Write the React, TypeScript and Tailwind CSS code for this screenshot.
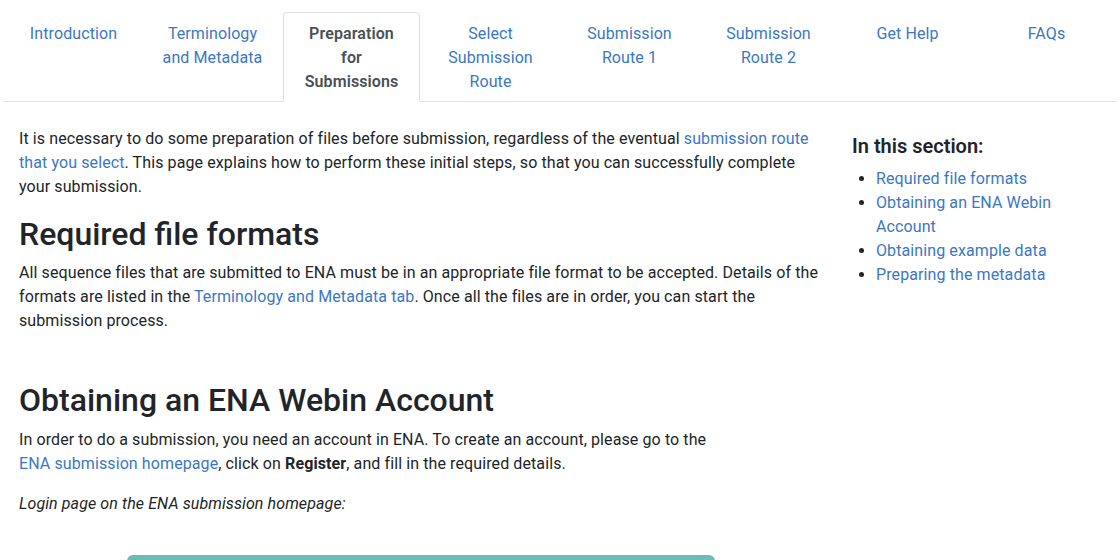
import React from 'react';

const TABS = [
  { id: 'intro', label: 'Introduction' },
  { id: 'terms', label: 'Terminology and Metadata' },
  { id: 'prep', label: 'Preparation for Submissions' },
  { id: 'select', label: 'Select Submission Route' },
  { id: 'route1', label: 'Submission Route 1' },
  { id: 'route2', label: 'Submission Route 2' },
  { id: 'help', label: 'Get Help' },
  { id: 'faqs', label: 'FAQs' },
];

const SECTION_LINKS = [
  'Required file formats',
  'Obtaining an ENA Webin Account',
  'Obtaining example data',
  'Preparing the metadata',
];

const linkCls = 'text-[#3b77c5] hover:underline';

export default function App() {
  const active = 'prep';

  return (
    <div className="min-h-screen bg-white font-['Roboto',sans-serif] text-[16px] leading-6 tracking-[0.1px] text-[#212529]">
      <div className="mx-1 pt-3">
        {/* Tab Navigation */}
        <ul className="flex border-b border-[#dee2e6]">
          {TABS.map((tab) => (
            <li key={tab.id} className="flex-1 -mb-px px-px">
              <a
                href="#"
                className={`block px-4 pt-[9px] pb-[7px] text-center rounded-t border ${
                  active === tab.id
                    ? 'bg-white border-[#dee2e6] border-b-white font-semibold text-[#495057]'
                    : 'border-transparent text-[#3b77c5]'
                }`}
              >
                {tab.label}
              </a>
            </li>
          ))}
        </ul>

        {/* Tab Content */}
        <div className="flex pt-[25px]">
          <div className="w-[833px] px-[15px]">
            <p className="mb-4">
              It is necessary to do some preparation of files before submission, regardless of the eventual{' '}
              <a href="#" className={linkCls}>submission route that you select</a>. This page explains how to
              perform these initial steps, so that you can successfully complete your submission.
            </p>

            <h2 className="mb-2 text-[32px] leading-[1.2] font-medium tracking-normal">Required file formats</h2>
            <p className="mb-4">
              All sequence files that are submitted to ENA must be in an appropriate file format to be accepted.
              Details of the formats are listed in the{' '}
              <a href="#" className={linkCls}>Terminology and Metadata tab</a>. Once all the files are in order,
              you can start the submission process.
            </p>

            <h2 className="mt-12 mb-2 text-[32px] leading-[1.2] font-medium tracking-normal">
              Obtaining an ENA Webin Account
            </h2>
            <p className="mb-4 max-w-[700px]">
              In order to do a submission, you need an account in ENA. To create an account, please go to the{' '}
              <a href="#" className={linkCls}>ENA submission homepage</a>, click on{' '}
              <b className="font-bold">Register</b>, and fill in the required details.
            </p>
            <p className="mb-4 italic">Login page on the ENA submission homepage:</p>

            <div className="mt-[39px] mx-auto w-[588px] h-[220px] rounded-t-md bg-[#6dbbb7]" />
          </div>

          {/* Sidebar */}
          <aside className="w-[277px] px-[15px]">
            <h4 className="mt-[7px] mb-[9px] text-[20px] leading-6 font-semibold tracking-normal">In this section:</h4>
            <ul className="list-disc pl-6">
              {SECTION_LINKS.map((s) => (
                <li key={s}>
                  <a href="#" className={linkCls}>{s}</a>
                </li>
              ))}
            </ul>
          </aside>
        </div>
      </div>
    </div>
  );
}
